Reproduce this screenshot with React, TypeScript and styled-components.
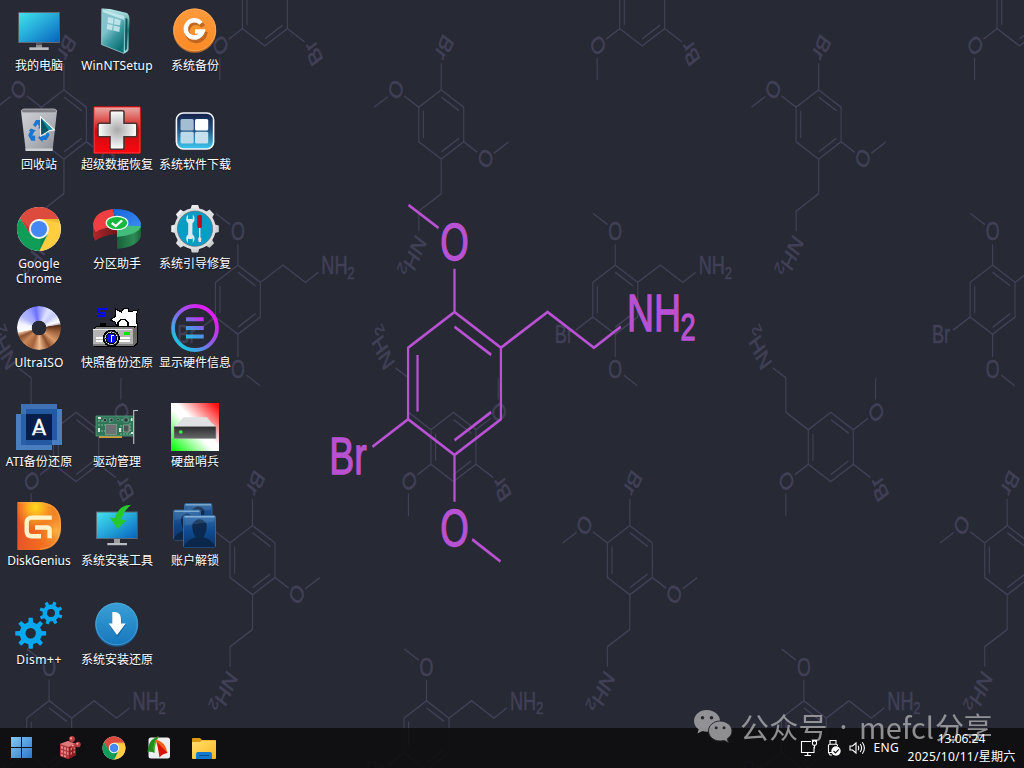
import React from 'react';
import styled, { createGlobalStyle } from 'styled-components';

const GlobalStyle = createGlobalStyle`
  body { margin: 0; background: #272935; }
  * { box-sizing: border-box; }
`;

const uiFont = `'Noto Sans', 'Noto Sans CJK SC', sans-serif`;

const Desktop = styled.main`
  position: relative;
  width: 1024px;
  height: 768px;
  overflow: hidden;
  display: flex;
  flex-direction: column;
  background: #272935;
  font-family: ${uiFont};
  color: #fff;
`;

const WallpaperSvg = styled.svg`
  position: absolute;
  inset: 0;
`;

const IconGrid = styled.div`
  position: relative;
  flex: 1;
  display: grid;
  grid-auto-flow: column;
  grid-template-rows: repeat(7, 99px);
  grid-auto-columns: 78px;
  padding-top: 7px;
`;

const Shortcut = styled.div`
  display: flex;
  flex-direction: column;
  align-items: center;
  gap: 3px;
`;

const Picture = styled.svg`
  display: block;
  width: 48px;
  height: 48px;
  overflow: visible;
`;

const Label = styled.span<{ $spacing?: number }>`
  width: 78px;
  font-size: 12px;
  line-height: 15px;
  text-align: center;
  white-space: pre-line;
  letter-spacing: ${(p) => p.$spacing ?? 0}px;
  text-shadow: 0 1px 1px rgba(0, 0, 0, 0.6);
`;

const Disc = styled.div`
  width: 44px;
  height: 44px;
  margin: 2px;
  border-radius: 50%;
  background: conic-gradient(from 0deg, #8f93ff 0deg, #dfe4ff 28deg, #c4caff 50deg, #fff 72deg, #c8c0d0 79deg,
    #5a3018 82deg, #a5673f 105deg, #d99a6c 130deg, #8a4d2b 152deg, #f0bd92 178deg, #a5623c 200deg,
    #c98558 225deg, #8c5232 245deg, #e0b090 256deg, #fff 259deg, #f4f4ff 282deg, #b2b7fa 305deg, #9ea2ff 330deg, #6c6eff 350deg, #8f93ff 360deg);
  -webkit-mask: radial-gradient(circle, transparent 7px, #000 7.6px);
  mask: radial-gradient(circle, transparent 7px, #000 7.6px);
`;

const Pointer = styled.svg`
  position: absolute;
  left: 39px;
  top: 115px;
`;

const Taskbar = styled.footer`
  position: relative;
  height: 40px;
  display: flex;
  align-items: center;
  background: rgba(14, 14, 17, 0.91);
`;

const Pinned = styled.div`
  display: flex;
  align-items: center;
  gap: 21px;
  padding-left: 10px;
`;

const PinIcon = styled.svg<{ $lead?: boolean }>`
  display: block;
  width: 24px;
  height: 24px;
  margin-right: ${(p) => (p.$lead ? 2 : 0)}px;
`;

const TrayLayer = styled.div`
  position: absolute;
  right: 0;
  bottom: 0;
`;

const Tray = styled.div`
  display: flex;
  align-items: center;
  height: 40px;
  padding-right: 8px;
`;

const TrayIcon = styled.svg`
  display: block;
  margin-right: 8px;
`;

const Language = styled.span`
  font-size: 12px;
  line-height: 40px;
  letter-spacing: 0.3px;
  margin-right: 8px;
`;

const Clock = styled.div`
  width: 109px;
  font-size: 12px;
  line-height: 18px;
  text-align: center;
  white-space: nowrap;
`;

const DateLine = styled.div`
  letter-spacing: 0.25px;
`;

const Watermark = styled.div`
  position: absolute;
  left: 693px;
  top: 708px;
  height: 36px;
  display: flex;
  align-items: center;
  gap: 7px;
  font: 400 29px/36px 'Noto Sans CJK SC', sans-serif;
  color: #a3a3a6;
  opacity: 0.86;
  white-space: pre;
`;

const WatermarkLine = styled.div`
  display: flex;
`;

const WatermarkText = styled.span<{ $spacing: number; $width: number }>`
  letter-spacing: ${(p) => p.$spacing}px;
  width: ${(p) => p.$width}px;
`;

const WatermarkDot = styled.span`
  width: 31px;
  font-family: 'Noto Sans', sans-serif;
  text-align: center;
`;

/* ---------- wallpaper ---------- */

type Placement = { x: number; y: number; r: number; turn?: number };

const SQUEEZE = 0.75;

function Molecule({ x, y, r, turn = 0 }: Placement) {
  const k = r / 71.5;
  const u = 71.5;
  const small = k < 0.6;
  const P = (a: number, b: number) => `${(a * u).toFixed(1)} ${(b * u).toFixed(1)}`;
  const inView = (a: number, b: number) => {
    const t = (turn * Math.PI) / 180;
    const sx = x + (a * Math.cos(t) - b * Math.sin(t)) * r * SQUEEZE;
    const sy = y + (a * Math.sin(t) + b * Math.cos(t)) * r;
    return sx > -14 && sx < 1038 && sy > -8 && sy < 774;
  };
  const d = [
    `M${P(0, -1)}L${P(0.866, -0.5)}L${P(0.866, 0.5)}L${P(0, 1)}L${P(-0.866, 0.5)}L${P(-0.866, -0.5)}Z`,
    `M${P(-0.69, -0.4)}L${P(-0.69, 0.39)}`,
    `M${P(0, -0.795)}L${P(0.684, -0.4)}`,
    `M${P(0, 0.795)}L${P(0.684, 0.4)}`,
    `M${P(0, -1)}L${P(0, -1.605)}`,
    `M${P(-0.298, -2.175)}L${P(-0.858, -2.497)}`,
    `M${P(0.866, -0.5)}L${P(1.735, -1)}L${P(2.6, -0.5)}L${P(3.1, -0.795)}`,
    `M${P(-0.866, 0.5)}L${P(-1.53, 0.884)}`,
    `M${P(0, 1)}L${P(0, 1.653)}`,
    `M${P(0.33, 2.18)}L${P(0.858, 2.49)}`,
  ].join('');
  return (
    <g transform={`translate(${x / SQUEEZE} ${y}) rotate(${turn}) scale(${k})`}>
      <path d={d} fill="none" stroke="currentColor" strokeWidth={small ? 3.3 : 3} strokeLinejoin="round" />
      <g fill="currentColor" stroke="currentColor" strokeWidth={small ? 1.2 : 1.3} fontFamily="'Liberation Sans', Arial, sans-serif" fontSize="51.5">
        {inView(0, -1.975) && <text x="0" y="-123.3" textAnchor="middle" textLength="38" lengthAdjust="spacingAndGlyphs">O</text>}
        {inView(0, 2.02) && <text x="0" y="162.500" textAnchor="middle" textLength="38" lengthAdjust="spacingAndGlyphs">O</text>}
        {inView(3.7, -1) && (
          <>
            <text x="230" y="-52.500" textLength="72" lengthAdjust="spacingAndGlyphs">NH</text>
            <text x="301.500" y="-43.500" fontSize="36">2</text>
          </>
        )}
        {inView(-2, 1) && <text x="-167" y="90.300" textLength="50" lengthAdjust="spacingAndGlyphs">Br</text>}
      </g>
    </g>
  );
}

const motif: Placement[] = [
  { x: 237.9, y: 299.7, r: 34.6, turn: 0 },
  { x: 63.9, y: 124.5, r: 34.6, turn: 120 },
  { x: -112.5, y: 11.3, r: 34.6, turn: 240 },
];

const scattered: Placement[] = motif.flatMap((m) =>
  [-1, 0, 1].flatMap((row) =>
    [-1, 0, 1, 2, 3].map((col) => ({ ...m, x: m.x + 377.35 * col + 188.6 * row, y: m.y + 435.7 * row }))
  )
).filter((m) => m.x > -60 && m.x < 1100 && m.y > -60 && m.y < 830);

function Wallpaper() {
  return (
    <WallpaperSvg width="1024" height="768" viewBox="0 0 1024 768">
      <g transform={`scale(${SQUEEZE} 1)`}>
        <g color="#414056">
          {scattered.map((m, i) => <Molecule key={i} {...m} />)}
        </g>
        <g color="#b952d2">
          <Molecule x={454.5} y={383.5} r={71.5} />
        </g>
      </g>
    </WallpaperSvg>
  );
}

/* ---------- shared drawing helpers ---------- */

function gearPath(cx: number, cy: number, outer: number, inner: number, teeth: number, hole: number, offset = 0) {
  const step = (Math.PI * 2) / teeth;
  const pts: string[] = [];
  for (let i = 0; i < teeth; i++) {
    const a = i * step + offset;
    [[-0.27, inner], [-0.17, outer], [0.17, outer], [0.27, inner]].forEach(([f, rad]) => {
      pts.push(`${(cx + Math.sin(a + f * step) * rad).toFixed(2)} ${(cy - Math.cos(a + f * step) * rad).toFixed(2)}`);
    });
  }
  return `M${pts.join('L')}Z` + (hole ? `M${cx - hole} ${cy}a${hole} ${hole} 0 1 0 ${hole * 2} 0a${hole} ${hole} 0 1 0 ${-hole * 2} 0Z` : '');
}

function ChromeShape() {
  return (
    <g>
      <circle cx="24" cy="24" r="22" fill="#fff" />
      <path d="M24 14H43.3A22 22 0 0 1 24 46L32.7 29Z" fill="#ffcd40" />
      <path d="M15.3 29L5 13A22 22 0 0 0 24.3 46L32.7 29L24 24Z" fill="#0f9d58" />
      <path d="M4.95 13L15.3 29L17 20L24 14H43.5A22 22 0 0 0 4.95 13Z" fill="#dd4b3e" />
      <path d="M26 14L43.5 14L44.5 18Z" fill="#d9a520" opacity=".45" />
      <path d="M6 14L15.3 30L15 24Z" fill="#8c2b1c" opacity=".45" />
      <path d="M24.3 46L32.7 29L26 34Z" fill="#0a6b3c" opacity=".4" />
      <circle cx="24" cy="24" r="10" fill="#f4f4f4" />
      <circle cx="24" cy="24" r="8.1" fill="#4587f3" />
    </g>
  );
}

/* ---------- desktop icons ---------- */

const Computer = () => (
  <Picture viewBox="0 0 48 48">
    <defs><linearGradient id="scr" x1="0" y1="0" x2="1" y2="1"><stop offset="0" stopColor="#3fe3ec" /><stop offset=".5" stopColor="#24a6d8" /><stop offset="1" stopColor="#0763be" /></linearGradient></defs>
    <path d="M21 36h6v5h-6z" fill="#8b8e92" /><path d="M21 36h6v2h-6z" fill="#55585c" />
    <path d="M14.3 40.3h19.4V43H14.3z" fill="#b9bbbe" />
    <path d="M3.2 5h41.6v31H3.2z" fill="#5d6a73" />
    <path d="M4 6h40v29H4z" fill="url(#scr)" />
  </Picture>
);

const Book = () => (
  <Picture viewBox="0 0 48 48">
    <defs>
      <linearGradient id="bk" x1="0" y1="0" x2=".6" y2="1"><stop offset="0" stopColor="#8cc3ce" /><stop offset=".45" stopColor="#7fc2cc" /><stop offset=".7" stopColor="#3a98a0" /><stop offset="1" stopColor="#0c7276" /></linearGradient>
      <linearGradient id="bks" x1="0" y1="0" x2="0" y2="1"><stop offset="0" stopColor="#c5eef0" /><stop offset=".5" stopColor="#1c7478" /><stop offset="1" stopColor="#9be3de" /></linearGradient>
    </defs>
    <path d="M9 1.4L17 2L34 6Q36.6 8 36.5 13L35.5 43Q34 46 31 46.6L30 10Z" fill="url(#bks)" />
    <path d="M8.8 1.8L28 7.5Q32 9 32 14L31 46.4L8.5 37.5Z" fill="url(#bk)" stroke="#a5dadd" strokeWidth=".7" />
    <path d="M10 2.5L31 9L31 13L10 5Z" fill="#d9f5f6" opacity=".7" />
    <path d="M32.5 11L34.5 12L33.8 42L32 44Z" fill="#0f5559" />
    <g fill="#cde9ef" opacity=".85"><path d="M15 10l5.600 1.300-.7 5.600-5.400-1.100zM21.700 11.500l6 1.400-.6 5.700-6.100-1.400zM14.300 17l5.500 1.200-.6 5.300-5.500-1.400zM20.800 18.400l6.200 1.400-.7 5.300-6.100-1.500z" /></g>
  </Picture>
);

const Orange = () => (
  <Picture viewBox="0 0 48 48">
    <defs><linearGradient id="org" x1="0" y1="0" x2="0" y2="1"><stop offset="0" stopColor="#ff9a3c" /><stop offset="1" stopColor="#fb8a24" /></linearGradient></defs>
    <circle cx="23.700" cy="24.200" r="21.600" fill="#b86c2c" />
    <circle cx="23.700" cy="22.800" r="21.400" fill="url(#org)" />
    <circle cx="23.700" cy="22.800" r="20.900" fill="none" stroke="#ffb469" strokeWidth=".6" />
    <path d="M31.500 18A9 9 0 1 0 33 26H25" transform="translate(.8 1.300)" fill="none" stroke="#a8561a" strokeWidth="4.600" opacity=".7" />
    <path d="M30 16.400A8.600 8.600 0 1 0 31.600 24.500H24" fill="none" stroke="#fff" strokeWidth="4.400" />
  </Picture>
);

const RecycleBin = () => (
  <Picture viewBox="0 0 48 48">
    <defs><linearGradient id="bin" x1="0" y1="0" x2="1" y2="1"><stop offset="0" stopColor="#d0d1d6" /><stop offset=".5" stopColor="#b3b6bc" /><stop offset="1" stopColor="#8b8e94" /></linearGradient></defs>
    <path d="M6 5L10.800 45H37.500L42 5Z" fill="url(#bin)" />
    <path d="M6 5Q7 3 9 3H39Q41 3 42 5L40 6.800H8Z" fill="#7e8086" stroke="#bcbdc1" strokeWidth=".8" />
    <path d="M10.300 42.500h27.500L37.400 45H10.700z" fill="#ced0d3" />
    <g fill="#1976d4"><path d="M18 19l3-5h5l2.500 4 2-1-2 6-6-.8 2-1.300-2-3-2 3.400z" /><path d="M16 22.500l5 2-1.600 1-2.200 4 3 .2v5h-4l-3-5.500 2-4-1.400-.8z" /><path d="M32 24l2.500 5-3 5h-4v2.300l-4.400-4.500 4.400-4.600v2.400h3l1-2-3-2z" /></g>
  </Picture>
);

const RedCross = () => (
  <Picture viewBox="0 0 48 48">
    <defs>
      <linearGradient id="rc" x1="0" y1="0" x2="0" y2="1"><stop offset="0" stopColor="#e9aaa6" /><stop offset=".32" stopColor="#d94843" /><stop offset=".5" stopColor="#c70e10" /><stop offset="1" stopColor="#fc0710" /></linearGradient>
      <radialGradient id="met"><stop offset="0" stopColor="#a9a9a9" /><stop offset=".75" stopColor="#e7e7e7" /><stop offset="1" stopColor="#fff" /></radialGradient>
    </defs>
    <path d="M0 0H48V48H0Z" fill="#8c0505" /><path d="M1.200 1.200H47V47H1.200Z" fill="url(#rc)" stroke="#ff5050" strokeWidth=".8" />
    <path d="M18.500 4.700h11q1.500 0 1.500 1.500V17.300h11.300q1.500 0 1.500 1.500v10.400q0 1.500-1.500 1.500H31v11q0 1.500-1.500 1.500h-11q-1.500 0-1.500-1.500V30.700H6.500q-1.500 0-1.500-1.500V18.800q0-1.500 1.500-1.500H17V6.200q0-1.500 1.500-1.500z" fill="url(#met)" stroke="#4c3434" strokeWidth="1.600" />
  </Picture>
);

const Panes = () => (
  <Picture viewBox="0 0 48 48">
    <defs><linearGradient id="pn" x1="0" y1="0" x2="0" y2="1"><stop offset="0" stopColor="#142048" /><stop offset=".45" stopColor="#234e80" /><stop offset="1" stopColor="#3dcaf3" /></linearGradient></defs>
    <rect x="5.400" y="7" width="37.200" height="36" rx="7" fill="url(#pn)" stroke="#f3f8fb" strokeWidth="1.600" />
    <rect x="9.500" y="13" width="13.200" height="11.600" rx="1.500" fill="#a3bed3" /><rect x="24" y="13" width="13.200" height="11.600" rx="1.500" fill="#fff" />
    <rect x="9.500" y="25.800" width="13.200" height="11.600" rx="1.500" fill="#bbd9e8" /><rect x="24" y="25.800" width="13.200" height="11.600" rx="1.500" fill="#c6e0ec" />
  </Picture>
);

const Chrome = () => <Picture viewBox="0 0 48 48"><ChromeShape /></Picture>;

const Partition = () => (
  <Picture viewBox="0 0 48 48">
    <defs>
      <linearGradient id="p1" x1="0" y1="0" x2="1" y2="0"><stop offset="0" stopColor="#b3262b" /><stop offset="1" stopColor="#6a1719" /></linearGradient>
      <linearGradient id="p2" x1="0" y1="0" x2="1" y2="0"><stop offset="0" stopColor="#17603a" /><stop offset=".7" stopColor="#2e8c56" /><stop offset="1" stopColor="#1d6338" /></linearGradient>
      <linearGradient id="p3" x1="0" y1="0" x2="1" y2="1"><stop offset="0" stopColor="#1766dc" /><stop offset="1" stopColor="#3d8bf2" /></linearGradient>
    </defs>
    <path d="M0 19L2 26L24 21V29Q10 30 2 35.800L0 30Z" fill="url(#p1)" />
    <path d="M0 19Q2 6 20 4L24 21.500Q12 22 2.500 27Q0 23 0 19Z" fill="#ef3f43" />
    <path d="M24 20.500L48 18V28L24 27Z" fill="#1452ae" />
    <path d="M20 4Q42 3 48 18Q48 21 46 24L24 20.500Z" fill="url(#p3)" />
    <path d="M24 30L47 23Q48 22 48 21V31Q45 42 24 44Z" fill="url(#p2)" />
    <path d="M24 20.500L48 21Q46 29.500 24 32Z" fill="#43bd7b" />
    <ellipse cx="24" cy="18" rx="10.800" ry="6.600" fill="#16b83e" stroke="#f4fff6" strokeWidth="1.200" />
    <path d="M18.700 18l4 3 6.500-5.600" fill="none" stroke="#fff" strokeWidth="2.200" />
  </Picture>
);

const RepairGear = () => (
  <Picture viewBox="0 0 48 48">
    <defs><linearGradient id="sg" x1="0" y1="0" x2="1" y2="1"><stop offset="0" stopColor="#fafafa" /><stop offset="1" stopColor="#bfc2c4" /></linearGradient></defs>
    <path d={gearPath(24, 23.7, 24, 20.3, 8, 0)} fill="url(#sg)" /><circle cx="24" cy="23.700" r="20.700" fill="#dcdedf" />
    <circle cx="24" cy="23.700" r="17.600" fill="#079dc7" stroke="#63717a" strokeWidth=".8" />
    <g fill="#ddebee">
      <path d="M17.200 14h4.200v20h-4.200z" />
      <path d="M17 9.500v4.700l2.400 1.600 2.400-1.600V9.500Q24.200 12 23.500 15.200Q22 18.800 19.400 18.800Q16.400 18.800 15.200 15.200Q14.600 12 17 9.500zM17 38v-4.500l2.400-1.600 2.400 1.600V38Q24.200 35.500 23.500 32.300Q22 28.800 19.400 28.800Q16.400 28.800 15.200 32.300Q14.600 35.500 17 38z" />
    </g>
    <rect x="26.300" y="10" width="4.700" height="13" rx="1.600" fill="#bd1014" /><path d="M28 23h1.400v9.200l1 1.200-.5 3.600h-2.200l-.6-3.600.9-1.200z" fill="#f4dfdf" />
  </Picture>
);

const Camera = () => (
  <Picture viewBox="0 0 48 48" shapeRendering="crispEdges">
    <path d="M12.500 3.500V6M12 4.500H6.500L5 6V7L6.500 8.500H10.500L12 9.500V11L10.500 12.200H5M4.500 10.500V13" fill="none" stroke="#0808f5" strokeWidth="2" />
    <path d="M22.500 5l6 3 2.500-4h4l1 4 9-2-2 6v5l2 5-3 1H24l-2-5-5-2 6-4z" fill="#fff" stroke="#000" strokeWidth="1" />
    <path d="M25 21.500v-3l3-3h4l3 3v3" fill="#fff" stroke="#000" strokeWidth="1.200" />
    <path d="M7 18.500h6V22H7z" fill="#000" />
    <path d="M1 25l3-3.500h41v18l-3 3H1z" fill="#000" />
    <path d="M1 25l3-2.500h38l-2 3z" fill="#808080" /><path d="M0 25h40v16.500H0z" fill="#b4b4b4" /><path d="M0 25h39v1.200H0z" fill="#f2f2f2" /><path d="M40 25l3.500-3v17L40 42z" fill="#6c6c6c" />
    <path d="M3 33h34v1.500H3zM3 36h34v1.500H3z" fill="#fff" /><path d="M0 40h40v1.500H0z" fill="#808080" />
    <path d="M31 28h6v3h-6z" fill="#00e500" />
    <circle cx="18.300" cy="34.300" r="8.600" fill="#000" /><circle cx="18.300" cy="34.300" r="6.500" fill="#fff" stroke="#aaa" strokeWidth=".6" /><circle cx="18.300" cy="34.300" r="5.400" fill="#0710ef" stroke="#000" />
    <path d="M20.500 31.500h-2v6" fill="none" stroke="#fff" strokeWidth="1.600" />
  </Picture>
);

const HardwareRing = () => (
  <Picture viewBox="0 0 48 48">
    <defs>
      <linearGradient id="hr" x1="0" y1="1" x2="1" y2="0"><stop offset=".15" stopColor="#22bfe2" /><stop offset=".5" stopColor="#8a62ea" /><stop offset=".8" stopColor="#de20f3" /></linearGradient>
      <linearGradient id="hl" gradientUnits="userSpaceOnUse" x1="15" y1="34" x2="30" y2="12"><stop offset="0" stopColor="#22bfe2" /><stop offset=".5" stopColor="#5d84e6" /><stop offset="1" stopColor="#de20f3" /></linearGradient>
    </defs>
    <circle cx="24" cy="24" r="22" fill="none" stroke="url(#hr)" strokeWidth="3.800" />
    <path d="M15 13.300h17.700v4H15zM15 22h17.700v4H15zM15 30.600h17.700v4H15z" fill="url(#hl)" />
  </Picture>
);

const Acronis = () => (
  <Picture viewBox="0 0 48 48">
    <path d="M6 1H42V37H6Z" fill="#3f72b4" /><path d="M1 11H37V47H1Z" fill="#4a7fbf" /><path d="M11 6H47V42H11Z" fill="#4a7fbf" />
    <path d="M6 11H37V42H6Z" fill="#2a60aa" /><path d="M11 6H42V37H11Z" fill="#2358a2" /><path d="M11 37H37V42H11Z" fill="#245aa4" /><path d="M11 11H37V37H11Z" fill="#061e48" />
    <text x="24" y="31.600" textAnchor="middle" fontFamily="'Open Sans'" fontSize="21.500" fill="#fff" stroke="#fff" strokeWidth=".6">A</text>
    <path d="M19 29.300h10" stroke="#fff" strokeWidth="1" />
  </Picture>
);

const Board = () => (
  <Picture viewBox="0 0 48 48">
    <path d="M6 32h23v3H6z" fill="#d39a38" />
    <path d="M3 13H40.500V33H3Z" fill="#2f7658" stroke="#65a687" strokeWidth=".7" />
    <path d="M5 18h6M5 22h7M5 28h7M28 17h10M27 31h11M28 22v7M37 20v9M17 15v5" stroke="#80b89c" strokeWidth="1" strokeDasharray="2 1" />
    <path d="M12.500 21.500h11v10h-11z" fill="#6c7271" stroke="#b5c2b8" strokeWidth=".8" strokeDasharray="1 1" /><path d="M30.500 22h5.500v7h-5.500z" fill="#4a5555" stroke="#b5c2b8" strokeWidth=".6" />
    <g fill="#1e3b36" stroke="#a5bdb0" strokeWidth=".5"><circle cx="12" cy="17" r="1.700" /><circle cx="18.500" cy="17" r="1.700" /><circle cx="25" cy="16.500" r="1.400" /><path d="M31 15h4v4h-4z" /></g>
    <g fill="#dce6dc"><path d="M5 14h3v2H5zM5 25h2v4H5zM26 25h2v4h-2zM38 15h1.500v3H38zM38 29h2v2h-2z" /></g>
    <path d="M45 7.500H40.700V41" fill="none" stroke="#c4c6c6" strokeWidth="1.100" />
  </Picture>
);

const Sentinel = () => (
  <Picture viewBox="0 0 48 48">
    <defs>
      <linearGradient id="hs" x1="0" y1="1" x2="1" y2="0"><stop offset=".05" stopColor="#14ff14" /><stop offset=".45" stopColor="#fff" /><stop offset=".55" stopColor="#fff" /><stop offset=".95" stopColor="#ff1010" /></linearGradient>
      <linearGradient id="hb" x1="0" y1="0" x2="0" y2="1"><stop offset="0" stopColor="#2c2c2c" /><stop offset="1" stopColor="#66686a" /></linearGradient>
    </defs>
    <path d="M0 0H48V48H0Z" fill="url(#hs)" />
    <path d="M12.500 14.300H36Q39 19 45 23.700H3Q9 19 12.500 14.300Z" fill="#dfe1e3" /><path d="M3 23.500h42v12H3z" fill="url(#hb)" stroke="#999" strokeWidth=".6" /><circle cx="9.800" cy="29" r="1.800" fill="#40f04c" />
  </Picture>
);

const DiskGenius = () => (
  <Picture viewBox="0 0 48 48">
    <defs>
      <linearGradient id="dgb" x1="0" y1="0" x2="1" y2="0"><stop offset="0" stopColor="#e8542a" /><stop offset=".5" stopColor="#f26a1e" /><stop offset="1" stopColor="#f08a30" /></linearGradient>
      <radialGradient id="dg" cx=".42" cy=".1" r=".5"><stop offset="0" stopColor="#ffd91c" /><stop offset=".4" stopColor="#fbaa20" /><stop offset="1" stopColor="#f58a20" stopOpacity="0" /></radialGradient>
      <radialGradient id="dg2" cx=".9" cy=".6" r=".4"><stop offset="0" stopColor="#fbb040" /><stop offset="1" stopColor="#f58a20" stopOpacity="0" /></radialGradient>
    </defs>
    <path d="M2.300 0H24Q46 1 46 22V27Q44 47 25 48H2.300Z" fill="url(#dgb)" /><path d="M2.300 0H24Q46 1 46 22V27Q44 47 25 48H2.300Z" fill="url(#dg)" /><path d="M2.300 0H24Q46 1 46 22V27Q44 47 25 48H2.300Z" fill="url(#dg2)" />
    <path d="M3 .8H24Q45 2 45.300 22V27Q43 46 25 47.300" fill="none" stroke="#ffb159" strokeWidth=".7" opacity=".8" />
    <path d="M36.800 15.600H17Q11.700 15.600 11.700 21V29Q11.700 34.200 17 34.200H26M20 25.500H32Q34.600 25.500 34.600 28V36.300" fill="none" stroke="#fff3c9" strokeWidth="4.400" />
  </Picture>
);

const InstallTool = () => (
  <Picture viewBox="0 0 48 48">
    <path d="M21 37h6v5h-6z" fill="#9b9da0" /><path d="M14.300 41h19.700v2.200H14.300z" fill="#babcc0" /><path d="M3 9.400h41.700V37H3z" fill="#5a6975" /><path d="M4 10.500h39.800v25.600H4z" fill="url(#scr)" />
    <path d="M38 3Q26 2.500 21.500 16.500L16.700 15.200L24.500 27L33.500 18.200L28.500 17.800Q30 9.500 38 3Z" fill="#27c72e" />
  </Picture>
);

const Person = ({ x, y, w, h, o }: { x: number; y: number; w: number; h: number; o: number }) => (
  <g transform={`translate(${x} ${y})`} opacity={o}>
    <rect width={w} height={h} rx="1.500" fill="url(#ac)" stroke="#3f78ae" strokeWidth=".7" />
    <path d={`M0 ${h}Q${w * 0.1} ${h * 0.75} ${w * 0.38} ${h * 0.68}Q${w * 0.25} ${h * 0.5} ${w * 0.28} ${h * 0.25}Q${w * 0.5} ${-h * 0.02} ${w * 0.72} ${h * 0.25}Q${w * 0.75} ${h * 0.5} ${w * 0.62} ${h * 0.68}Q${w * 0.9} ${h * 0.75} ${w} ${h}Z`} fill="#0b2344" opacity=".85" />
    <path d={`M1 .5H${w - 1}V2H1Z`} fill="#b8dcf5" opacity=".6" />
    <path d={`M1 1H${w - 1}V6L1 10Z`} fill="#b8dcf5" opacity=".12" />
  </g>
);

const Accounts = () => (
  <Picture viewBox="0 0 48 48">
    <defs><linearGradient id="ac" x1="0" y1="0" x2="0" y2="1"><stop offset="0" stopColor="#2f6aa8" /><stop offset=".5" stopColor="#0f4a90" /><stop offset="1" stopColor="#0d3568" /></linearGradient></defs>
    <Person x={13.5} y={1.5} w={27.5} h={25} o={0.92} /><Person x={2.5} y={8} w={27} h={30} o={0.92} /><Person x={12.5} y={13.5} w={32} h={32} o={1} />
  </Picture>
);

const Gears = () => (
  <Picture viewBox="0 0 48 48">
    <path d={gearPath(15.7, 32.3, 15.6, 11.2, 8, 5.2)} fill="#08a8ef" fillRule="evenodd" /><path d={gearPath(36, 12, 11.7, 8.5, 8, 4, 0.35)} fill="#08a8ef" fillRule="evenodd" />
  </Picture>
);

const Download = () => (
  <Picture viewBox="0 0 48 48">
    <defs><linearGradient id="dl" x1="0" y1="0" x2="0" y2="1"><stop offset="0" stopColor="#3aa0d6" /><stop offset="1" stopColor="#1777bd" /></linearGradient></defs>
    <circle cx="23.700" cy="24.200" r="21.600" fill="#1c5589" /><circle cx="23.700" cy="23" r="21.400" fill="url(#dl)" /><circle cx="23.700" cy="23" r="20.800" fill="none" stroke="#5aafd9" strokeWidth=".6" />
    <path d="M19.500 12.500h3q6 1 6 7v4h4.500L24.500 36L16 23.500h3.500z" fill="#16548a" opacity=".6" /><path d="M19.300 11h3q5.700 1 5.700 7v4.500h4.700L24 34L15.700 22.500h3.600z" fill="#fff" />
  </Picture>
);

type Item = { name: string; icon: React.ReactNode; spacing?: number };

const items: Item[] = [
  { name: '我的电脑', icon: <Computer /> },
  { name: '回收站', icon: <RecycleBin /> },
  { name: 'Google\nChrome', icon: <Chrome />, spacing: 0.2 },
  { name: 'UltraISO', icon: <Disc />, spacing: 0.15 },
  { name: 'ATI备份还原', icon: <Acronis />, spacing: 0.15 },
  { name: 'DiskGenius', icon: <DiskGenius />, spacing: 0.05 },
  { name: 'Dism++', icon: <Gears />, spacing: 0.5 },
  { name: 'WinNTSetup', icon: <Book />, spacing: 0.15 },
  { name: '超级数据恢复', icon: <RedCross /> },
  { name: '分区助手', icon: <Partition /> },
  { name: '快照备份还原', icon: <Camera /> },
  { name: '驱动管理', icon: <Board /> },
  { name: '系统安装工具', icon: <InstallTool /> },
  { name: '系统安装还原', icon: <Download /> },
  { name: '系统备份', icon: <Orange /> },
  { name: '系统软件下载', icon: <Panes /> },
  { name: '系统引导修复', icon: <RepairGear /> },
  { name: '显示硬件信息', icon: <HardwareRing /> },
  { name: '硬盘哨兵', icon: <Sentinel /> },
  { name: '账户解锁', icon: <Accounts /> },
];

/* ---------- taskbar icons ---------- */

const StartIcon = () => (
  <PinIcon viewBox="0 0 24 24" $lead>
    <defs><linearGradient id="st" gradientUnits="userSpaceOnUse" x1="1" y1="1" x2="22" y2="22"><stop offset="0" stopColor="#80cbf8" /><stop offset="1" stopColor="#2f75c9" /></linearGradient></defs>
    <path d="M1 1h10v10H1zM12 1h10v10H12zM1 12h10v10H1zM12 12h10v10H12z" fill="url(#st)" />
  </PinIcon>
);

const CubesIcon = () => (
  <PinIcon viewBox="0 0 24 24">
    <path d="M3 8l8-3 8 3v11l-8 4-8-3z" fill="#b23a3f" /><path d="M3 8l8-3 8 3-7 3z" fill="#dd7a7b" /><path d="M12 11l7-3v11l-7 4z" fill="#8b191f" />
    <g fill="#ef9b98"><path d="M4 10l2 .6v2.400L4 12.400zM7 11l2 .6V14l-2-.6zM10 12l1.500.5V15L10 14.500zM4 14l2 .6V17l-2-.6zM7 15l2 .6V18l-2-.6zM10 16l1.500.5V19L10 18.500zM4 18l2 .6v1.900L4 20zM7 19l2 .6v2L7 21z" opacity=".8" /><path d="M13.500 12l1.500-.7V14l-1.500.7zM16.500 11l1.500-.7V13l-1.500.7zM13.500 16.500l1.500-.7v2.500l-1.500.7zM16.500 15l1.500-.7v2.500l-1.500.7z" opacity=".7" /></g>
    <g fill="#bd3c42"><circle cx="15" cy="3" r="2.900" /><circle cx="21" cy="8.500" r="2.700" /><circle cx="16.500" cy="10" r="2.200" /></g><g fill="#f2b0aa"><circle cx="14" cy="2.300" r="1.100" /><circle cx="20.300" cy="7.700" r="1" /><circle cx="15.800" cy="9.400" r=".9" /></g>
  </PinIcon>
);

const FanIcon = () => (
  <PinIcon viewBox="0 0 24 24">
    <rect x="1.500" y="1.500" width="21.500" height="21" rx="2.500" fill="#eceeed" />
    <path d="M.5 16Q1.500 5 7 2.500L12 -.5L10.500 3Q7.500 8 7.500 17Q4 15 .5 16Z" fill="#218d20" /><path d="M8 5L11 1L9.500 4Q7 9 7 15Q5.500 12 8 5Z" fill="#53c62b" /><path d="M8.500 3.500Q18 5 20.500 17L13 18Z" fill="#f05f19" /><path d="M10 6L20.500 17Q15.500 17.500 12.500 21.500Z" fill="#d8110d" />
  </PinIcon>
);

const FolderIcon = () => (
  <PinIcon viewBox="0 0 24 24">
    <defs><linearGradient id="fd" x1="0" y1="0" x2="1" y2="1"><stop offset="0" stopColor="#ffdf70" /><stop offset="1" stopColor="#fbb820" /></linearGradient></defs>
    <path d="M0 3Q0 2 1 2H8L10 4H23Q24 4 24 5V20H0Z" fill="#dc9a10" /><path d="M0 6H8L10 4.500H24V22Q24 23 23 23H1Q0 23 0 22Z" fill="url(#fd)" /><path d="M4 23V18Q4 16 6 16H18Q20 16 20 18V23Z" fill="#1279ce" /><path d="M7 19.500H17" stroke="#0a4b8c" strokeWidth="1" />
  </PinIcon>
);

const NetworkIcon = () => (
  <TrayIcon width="18" height="18" viewBox="0 0 18 18" fill="none" stroke="#fff" strokeWidth="1.100">
    <path d="M11 2.500H1.500V13.500H14V8M4.500 16.500H11M7.700 13.500V16.500M12.500 1.500h4v3.500l-1 1.300h-2l-1-1.300zM14.500 6.500V9.500M13.700 1V3M15.500 1V3" />
  </TrayIcon>
);

const UsbIcon = () => (
  <TrayIcon width="15" height="18" viewBox="0 0 15 18">
    <path d="M4 5V1.500H10V5M6 13.500H2.500V6.500Q2.500 5.300 3.700 5.300H10Q11.500 5.300 11.500 7" fill="none" stroke="#fff" strokeWidth="1.100" /><path d="M2.500 13.500L4 16H6" fill="none" stroke="#fff" strokeWidth="1.100" />
    <circle cx="10" cy="12" r="4.700" fill="#fff" /><path d="M7.500 12l2 2 3.300-3.600" fill="none" stroke="#17171a" strokeWidth="1.200" />
  </TrayIcon>
);

const SoundIcon = () => (
  <TrayIcon width="17" height="16" viewBox="0 0 17 16" fill="none" stroke="#fff" strokeWidth="1.100">
    <path d="M1 6v4h2.500L7 13V3L3.500 6zM9 5.700q1.500 2.300 0 4.600M11.200 4q2.800 4 0 8M13.300 2.200q4.200 5.800 0 11.600" />
  </TrayIcon>
);

const WeChat = () => (
  <svg width="40" height="34" viewBox="0 0 40 34">
    <path d="M14 1C6.700 1 1 5.800 1 12c0 3.500 1.800 6.400 4.600 8.300L4.500 24.500l5-2.400c1.500.4 3 .6 4.500.6C21.200 22.700 27 18 27 12S21.200 1 14 1Z" fill="currentColor" />
    <path d="M27 12C20.700 12 15.500 16.300 15.500 22S20.700 32 27 32c1.300 0 2.600-.2 3.900-.6l4.600 2.300-1.200-3.900C37 28 39 25.200 39 22c0-5.700-5.500-10-12-10Z" fill="currentColor" stroke="#29292f" strokeWidth="1" />
    <g fill="#29292f"><circle cx="9.500" cy="8.700" r="1.800" /><circle cx="18.500" cy="8.700" r="1.800" /><circle cx="23.200" cy="18.800" r="1.500" /><circle cx="31" cy="18.800" r="1.500" /></g>
  </svg>
);

export default function App() {
  return (
    <Desktop>
      <GlobalStyle />
      <Wallpaper />
      <IconGrid>
        {items.map((it) => (
          <Shortcut key={it.name}>
            {it.icon}
            <Label $spacing={it.spacing}>{it.name}</Label>
          </Shortcut>
        ))}
      </IconGrid>
      <Pointer width="18" height="23" viewBox="0 0 18 23">
        <path d="M1.500 1.800L15.300 14.800L10 15.700L1.800 21Z" fill="#1b8ba0" stroke="#fff" strokeWidth="1.100" /><path d="M2 3L9.500 15.500L2.300 20Z" fill="#075463" />
      </Pointer>
      <Taskbar>
        <Pinned>
          <StartIcon /><CubesIcon />
          <PinIcon viewBox="1 1 46 46"><ChromeShape /></PinIcon>
          <FanIcon /><FolderIcon />
        </Pinned>
      </Taskbar>
      <Watermark>
        <WeChat />
        <WatermarkLine>
          <WatermarkText $spacing={0.3} $width={88}>公众号</WatermarkText>
          <WatermarkDot>·</WatermarkDot>
          <WatermarkText $spacing={0} $width={76}>mefcl</WatermarkText>
          <WatermarkText $spacing={-0.5} $width={58}>分享</WatermarkText>
        </WatermarkLine>
      </Watermark>
      <TrayLayer>
        <Tray>
          <NetworkIcon /><UsbIcon /><SoundIcon />
          <Language>ENG</Language>
          <Clock>
            <div>13:06:24</div>
            <DateLine>2025/10/11/星期六</DateLine>
          </Clock>
        </Tray>
      </TrayLayer>
    </Desktop>
  );
}
